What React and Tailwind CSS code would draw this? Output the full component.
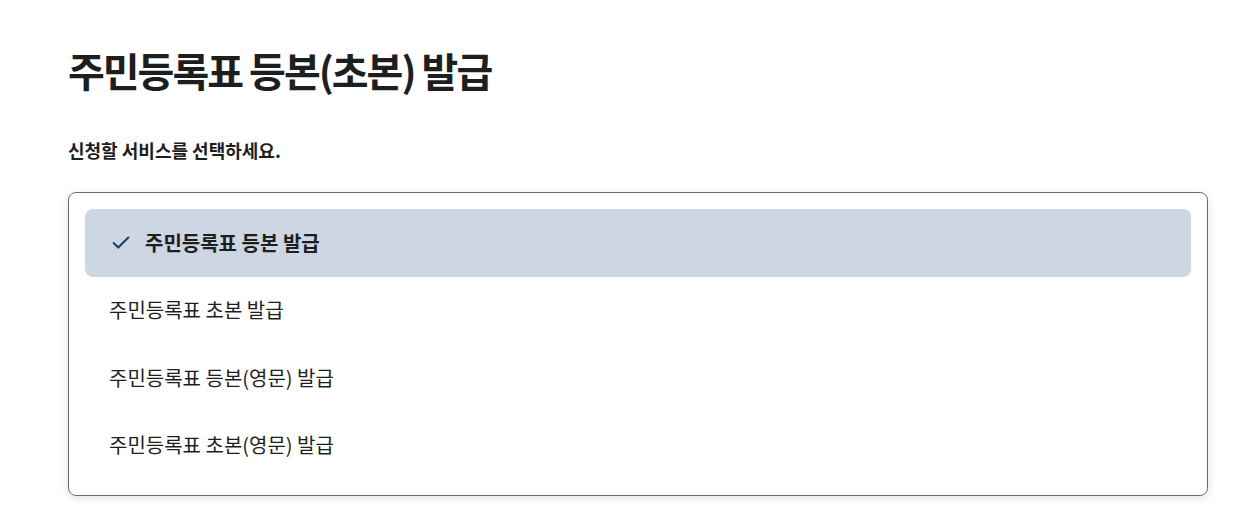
import {Check} from "lucide-react";

const services = [
    '주민등록표 등본 발급',
    '주민등록표 초본 발급',
    '주민등록표 등본(영문) 발급',
    '주민등록표 초본(영문) 발급',
]

export default function App() {
    const selected = 0

    return (
        <div className="min-h-screen bg-white text-[#1e1e1e] pl-[68px] pr-[31px] pt-[40px]"
             style={{fontFamily: '"Noto Sans CJK KR", "Noto Sans", sans-serif'}}>
            <h1 className="text-[40px] leading-[60px] font-bold tracking-[-2px]">주민등록표 등본(초본) 발급</h1>

            <p className="mt-[38px] text-[18px] leading-[24px] font-bold">신청할 서비스를 선택하세요.</p>

            <ul className="mt-[30px] border border-[#6b6b6b] rounded-[8px] p-4 shadow-[0_2px_8px_rgba(0,0,0,0.12)]">
                {services.map((name, i) => (
                    <li key={name}
                        className={i === selected
                            ? "flex items-center gap-[13px] h-[67.5px] px-[25px] rounded-[8px] bg-[#cdd7e3] font-bold"
                            : "flex items-center h-[67.5px] px-[24px] rounded-[8px]"}>
                        {i === selected && <Check size={22} strokeWidth={2.2} className="text-[#1c3b6c]"/>}
                        <span className="text-[20px]">{name}</span>
                    </li>
                ))}
            </ul>
        </div>
    )
}
